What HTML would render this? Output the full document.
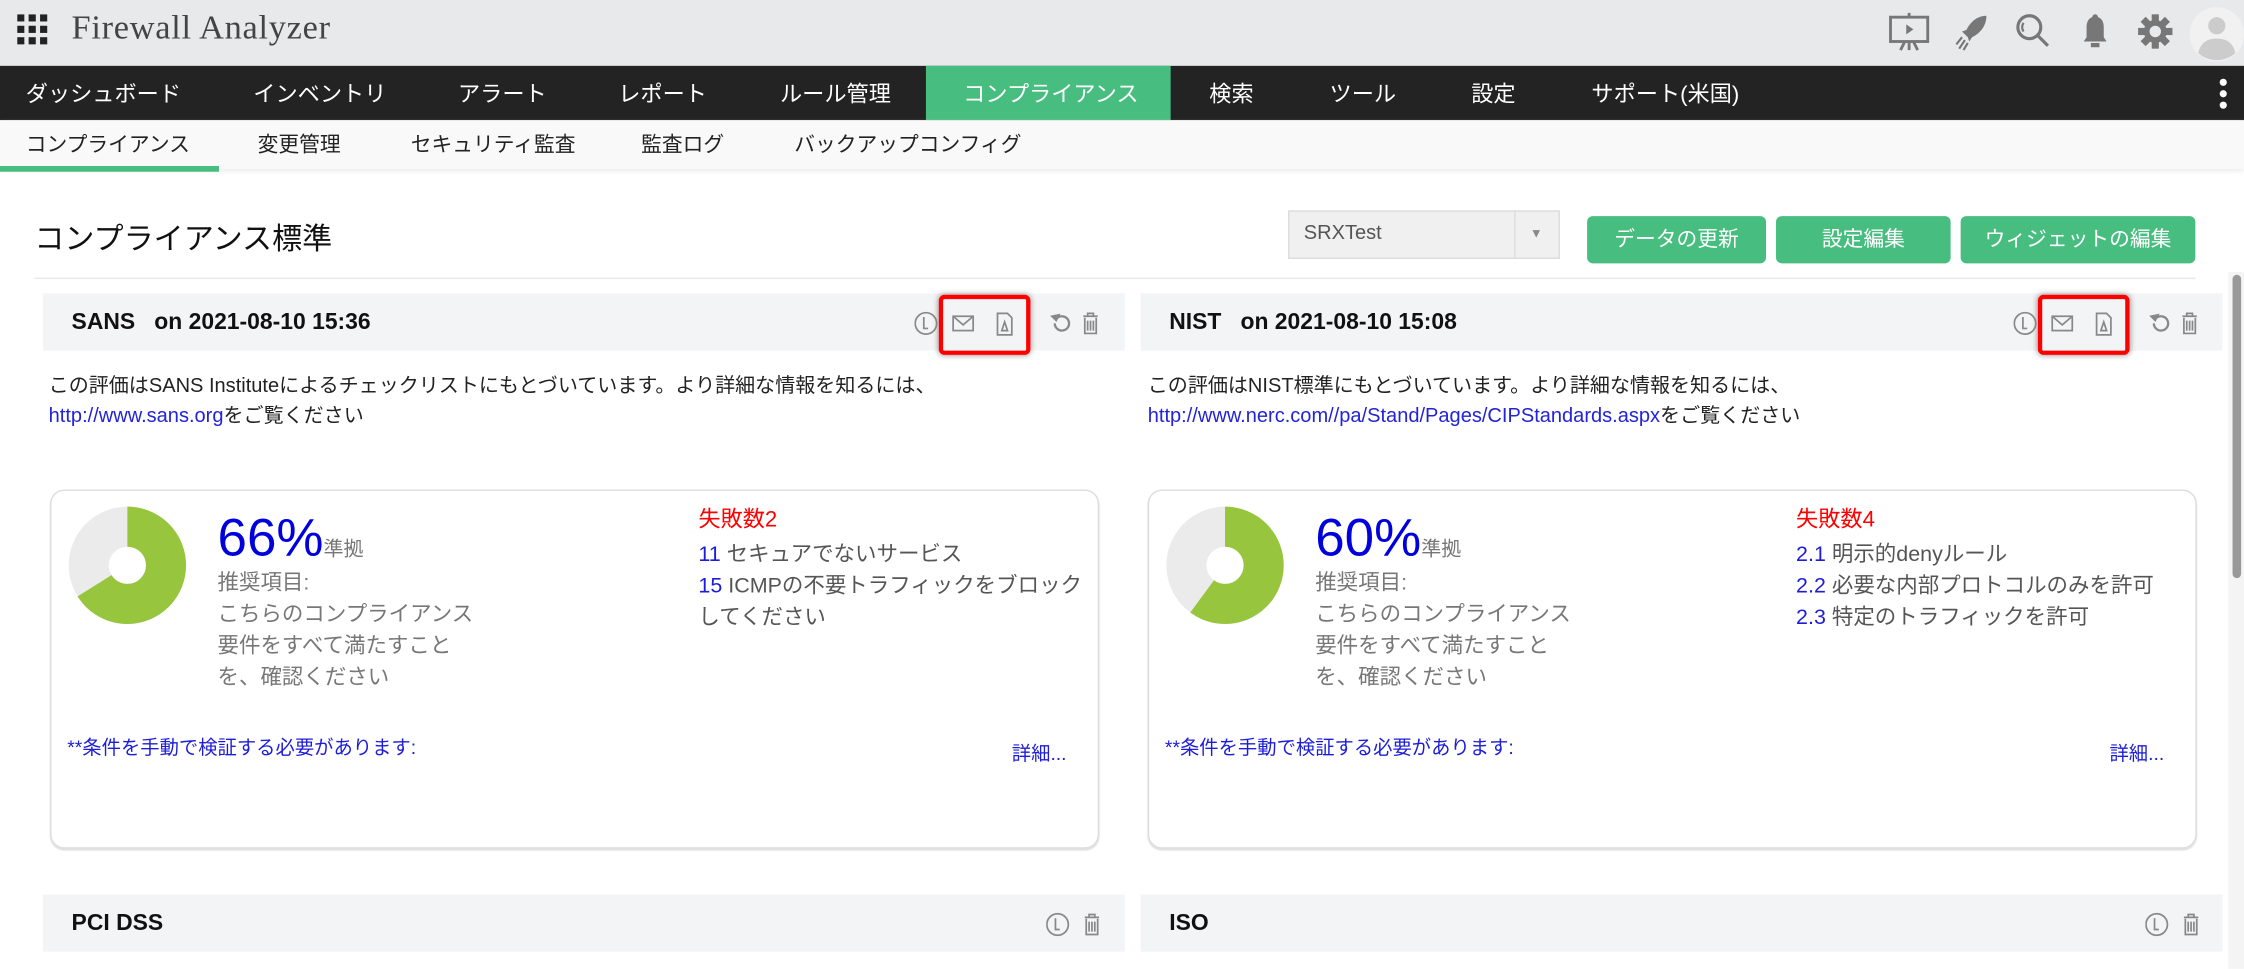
<!DOCTYPE html>
<html><head><meta charset="utf-8">
<style>
html,body{margin:0;padding:0;width:2244px;height:969px;overflow:hidden;background:#fff}
#w{position:absolute;left:0;top:0;width:1568px;height:677px;transform:scale(1.43112);transform-origin:0 0;font-family:"Liberation Sans","Noto Sans CJK JP",sans-serif;color:#222}
.a{position:absolute;white-space:nowrap}
.hdr{left:0;top:0;width:1568px;height:46px;background:#e8e9eb}
.nav{left:0;top:46px;width:1568px;height:38px;background:#232323}
.nav span{position:absolute;top:8px;color:#fff;font-size:15.5px}
.sub{left:0;top:84px;width:1568px;height:34px;background:#f9f9f9;box-shadow:0 2px 3px #eee}
.sub span{position:absolute;top:6px;color:#222;font-size:14.5px}
.btn{position:absolute;top:151px;height:33px;background:#48bd80;border-radius:4px;color:#fff;font-size:14.5px;text-align:center;line-height:35px}
.ch{position:absolute;height:40px;background:#f3f4f6}
.ch b{position:absolute;left:20px;top:12px;font-size:16px;color:#111}
.desc{font-size:14px;color:#222;line-height:21px}
.desc a{color:#2323d8;text-decoration:none}
.box{position:absolute;top:342px;width:731px;height:249px;border:1px solid #ddd;border-radius:10px;box-shadow:0 1px 1px #ddd}
.pct{position:absolute;left:116px;top:12px;font-size:37px;color:#0000dd}
.pct small{font-size:14px;color:#777}
.rec{position:absolute;left:116px;top:54px;font-size:15px;color:#777;line-height:22px}
.fail{position:absolute;top:10px;font-size:15.5px;color:#f00;line-height:22px}
.fail div{color:#555;font-size:15px}
.fail div:first-child{margin-top:2px}
.fail i{font-style:normal;color:#1d1dd8}
.man{position:absolute;left:11px;top:168px;font-size:13.5px;color:#1d1dd8}
.det{position:absolute;top:172px;font-size:13.5px;color:#1d1dd8}
.red{position:absolute;top:206px;width:58px;height:36px;border:3px solid #f00;border-radius:4px;box-shadow:0 0 4px #888}
svg.i{position:absolute}
</style></head><body><div id="w">
<div class="a hdr"></div>
<svg class="i" style="left:12px;top:10px" width="22" height="22" viewBox="0 0 22 22" fill="#222"><rect x="0" y="0" width="5" height="5"/><rect x="8" y="0" width="5" height="5"/><rect x="16" y="0" width="5" height="5"/><rect x="0" y="8" width="5" height="5"/><rect x="8" y="8" width="5" height="5"/><rect x="16" y="8" width="5" height="5"/><rect x="0" y="16" width="5" height="5"/><rect x="8" y="16" width="5" height="5"/><rect x="16" y="16" width="5" height="5"/></svg>
<div class="a" style="left:50px;top:7px;font-size:24px;font-family:'Liberation Serif',serif;color:#444;letter-spacing:0.5px">Firewall Analyzer</div>
<svg class="i" style="left:1318px;top:8px" width="32" height="30" viewBox="0 0 32 30" fill="none" stroke="#777" stroke-width="2"><rect x="3" y="4" width="26" height="17"/><path d="M16 1v3M10 27l3-6M22 27l-3-6M16 21v6"/><path d="M14 9l5 3.5-5 3.5z" fill="#777" stroke="none"/></svg>
<svg class="i" style="left:1366px;top:10px" width="24" height="26" viewBox="0 0 24 26" fill="#777"><path d="M22 1c-6 0-11 4-14 10l-3 1 4 4 1 3 2-3c6-3 10-8 10-15z"/><path d="M3 24l4-6M6 25l3-5M1 21l4-5" stroke="#777" stroke-width="1.5"/></svg>
<svg class="i" style="left:1408px;top:9px" width="26" height="26" viewBox="0 0 26 26" fill="none" stroke="#777" stroke-width="2.2"><circle cx="10" cy="10" r="8"/><path d="M16 16l7 7"/><path d="M6 7a5 5 0 0 0 0 6" stroke-width="1.5"/></svg>
<svg class="i" style="left:1453px;top:9px" width="22" height="26" viewBox="0 0 22 26" fill="#777"><path d="M11 1c-1 0-2 1-2 2-3 1-4 4-4 7v7l-2 3h16l-2-3v-7c0-3-1-6-4-7 0-1-1-2-2-2z"/><rect x="8" y="21" width="6" height="3"/></svg>
<svg class="i" style="left:1493px;top:9px" width="26" height="26" viewBox="0 0 26 26"><g fill="#777"><circle cx="13" cy="13" r="8"/><rect x="10.5" y="1" width="5" height="24"/><rect x="10.5" y="1" width="5" height="24" transform="rotate(45 13 13)"/><rect x="10.5" y="1" width="5" height="24" transform="rotate(90 13 13)"/><rect x="10.5" y="1" width="5" height="24" transform="rotate(135 13 13)"/></g><circle cx="13" cy="13" r="4" fill="#e8e9eb"/></svg>
<svg class="i" style="left:1530px;top:5px" width="38" height="38" viewBox="0 0 38 38"><circle cx="19" cy="19" r="19" fill="#f1f1f1"/><circle cx="19" cy="13" r="6" fill="#ccc"/><path d="M6 32c2-8 7-10 13-10s11 2 13 10c-3 3-8 5-13 5s-10-2-13-5z" fill="#ccc"/></svg>

<div class="a nav">
<span style="left:18px">ダッシュボード</span><span style="left:177px">インベントリ</span><span style="left:320px">アラート</span><span style="left:432px">レポート</span><span style="left:545px">ルール管理</span>
<div style="position:absolute;left:647px;top:0;width:171px;height:38px;background:#48bd80"></div>
<span style="left:673px">コンプライアンス</span><span style="left:845px">検索</span><span style="left:929px">ツール</span><span style="left:1028px">設定</span><span style="left:1112px">サポート(米国)</span>
<div style="position:absolute;left:1551px;top:9px;width:5px;height:5px;border-radius:3px;background:#fff;box-shadow:0 8px 0 #fff,0 16px 0 #fff"></div>
</div>
<div class="a sub">
<span style="left:18px">コンプライアンス</span><span style="left:180px">変更管理</span><span style="left:287px">セキュリティ監査</span><span style="left:448px">監査ログ</span><span style="left:555px">バックアップコンフィグ</span>
<div style="position:absolute;left:0;top:32px;width:153px;height:4px;background:#48bd80"></div>
</div>

<div class="a" style="left:24px;top:151px;font-size:21px;color:#111">コンプライアンス標準</div>
<div class="a" style="left:900px;top:147px;width:188px;height:32px;background:#f0f0f0;border:1px solid #ddd"><span style="position:absolute;left:10px;top:6px;font-size:14px;color:#555">SRXTest</span><div style="position:absolute;left:157px;top:0;width:1px;height:32px;background:#ddd"></div><span style="position:absolute;left:168px;top:10px;font-size:9px;color:#888">▼</span></div>
<div class="btn" style="left:1109px;width:125px">データの更新</div>
<div class="btn" style="left:1241px;width:122px">設定編集</div>
<div class="btn" style="left:1370px;width:164px">ウィジェットの編集</div>
<div class="a" style="left:24px;top:194px;width:1510px;height:1px;background:#e8e8e8"></div>

<div class="ch" style="left:30px;top:205px;width:756px"><b>SANS &nbsp; on 2021-08-10 15:36</b></div>
<div class="ch" style="left:797px;top:205px;width:756px"><b>NIST &nbsp; on 2021-08-10 15:08</b></div>

<svg class="i" style="left:639px;top:216px" width="135" height="20" viewBox="0 0 135 20" fill="none" stroke="#888" stroke-width="1.2"><circle cx="8" cy="10" r="7.5"/><path d="M6.5 5.5v8h3"/><rect x="27" y="5" width="14" height="10"/><path d="M27 5l7 6 7-6"/><path d="M58 3h7l3 3v12h-10z M61 15l2-6 2 6z"/><path d="M100 6a5 5 0 1 1-2 4" stroke-width="1.6"/><path d="M96 5l3 3 2-4z" fill="#888"/><path d="M118 5h10M121 5v-2h4v2M119 6v11h8v-11M121 8v7M123 8v7M125 8v7"/></svg>
<svg class="i" style="left:1407px;top:216px" width="135" height="20" viewBox="0 0 135 20" fill="none" stroke="#888" stroke-width="1.2"><circle cx="8" cy="10" r="7.5"/><path d="M6.5 5.5v8h3"/><rect x="27" y="5" width="14" height="10"/><path d="M27 5l7 6 7-6"/><path d="M58 3h7l3 3v12h-10z M61 15l2-6 2 6z"/><path d="M100 6a5 5 0 1 1-2 4" stroke-width="1.6"/><path d="M96 5l3 3 2-4z" fill="#888"/><path d="M118 5h10M121 5v-2h4v2M119 6v11h8v-11M121 8v7M123 8v7M125 8v7"/></svg>
<div class="red" style="left:656px"></div>
<div class="red" style="left:1424px"></div>

<div class="a desc" style="left:34px;top:259px">この評価はSANS Instituteによるチェックリストにもとづいています。より詳細な情報を知るには、<br><a>http://www.sans.org</a>をご覧ください</div>
<div class="a desc" style="left:802px;top:259px">この評価はNIST標準にもとづいています。より詳細な情報を知るには、<br><a>http://www.nerc.com//pa/Stand/Pages/CIPStandards.aspx</a>をご覧ください</div>

<div class="box" style="left:35px">
<svg class="i" style="left:11px;top:10px" width="84" height="84" viewBox="0 0 84 84"><circle cx="42" cy="42" r="27" fill="none" stroke="#ebebeb" stroke-width="28"/><circle cx="42" cy="42" r="27" fill="none" stroke="#97c53d" stroke-width="28" stroke-dasharray="112 200" transform="rotate(-90 42 42)"/></svg>
<div class="pct">66%<small>準拠</small></div>
<div class="rec">推奨項目:<br>こちらのコンプライアンス<br>要件をすべて満たすこと<br>を、確認ください</div>
<div class="fail" style="left:452px">失敗数2<div><i>11</i> セキュアでないサービス</div><div><i>15</i> ICMPの不要トラフィックをブロック<br>してください</div></div>
<div class="man">**条件を手動で検証する必要があります:</div>
<div class="det" style="left:671px">詳細...</div>
</div>
<div class="box" style="left:802px">
<svg class="i" style="left:11px;top:10px" width="84" height="84" viewBox="0 0 84 84"><circle cx="42" cy="42" r="27" fill="none" stroke="#ebebeb" stroke-width="28"/><circle cx="42" cy="42" r="27" fill="none" stroke="#97c53d" stroke-width="28" stroke-dasharray="101.8 200" transform="rotate(-90 42 42)"/></svg>
<div class="pct">60%<small>準拠</small></div>
<div class="rec">推奨項目:<br>こちらのコンプライアンス<br>要件をすべて満たすこと<br>を、確認ください</div>
<div class="fail" style="left:452px">失敗数4<div><i>2.1</i> 明示的denyルール</div><div><i>2.2</i> 必要な内部プロトコルのみを許可</div><div><i>2.3</i> 特定のトラフィックを許可</div></div>
<div class="man">**条件を手動で検証する必要があります:</div>
<div class="det" style="left:671px">詳細...</div>
</div>

<div class="ch" style="left:30px;top:625px;width:756px"><b>PCI DSS</b></div>
<div class="ch" style="left:797px;top:625px;width:756px"><b>ISO</b></div>
<svg class="i" style="left:731px;top:636px" width="40" height="20" viewBox="0 0 40 20" fill="none" stroke="#888" stroke-width="1.2"><circle cx="8" cy="10" r="7.5"/><path d="M6.5 5.5v8h3"/><path d="M27 5h10M30 5v-2h4v2M28 6v11h8v-11M30 8v7M32 8v7M34 8v7"/></svg>
<svg class="i" style="left:1499px;top:636px" width="40" height="20" viewBox="0 0 40 20" fill="none" stroke="#888" stroke-width="1.2"><circle cx="8" cy="10" r="7.5"/><path d="M6.5 5.5v8h3"/><path d="M27 5h10M30 5v-2h4v2M28 6v11h8v-11M30 8v7M32 8v7M34 8v7"/></svg>

<div class="a" style="left:1557px;top:190px;width:11px;height:487px;background:#f4f4f4"></div>
<div class="a" style="left:1560px;top:192px;width:6px;height:212px;background:#999;border-radius:3px"></div>
</div></body></html>
